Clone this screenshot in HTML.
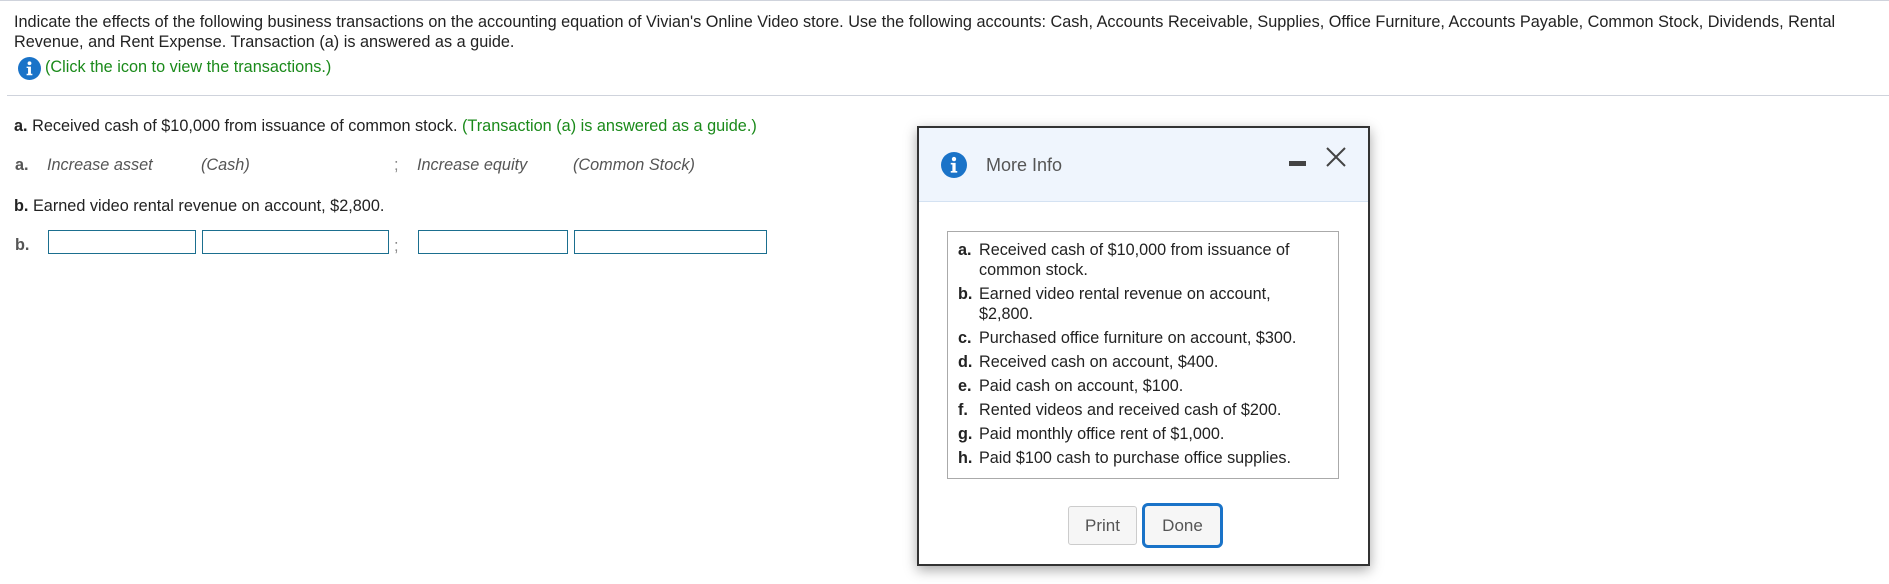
<!DOCTYPE html>
<html><head><style>
body{margin:0;width:1889px;height:584px;overflow:hidden;background:#fff;font-family:"Liberation Sans",Arial,sans-serif;color:#222;position:relative}
.a{position:absolute;white-space:nowrap;font-size:16.25px}
.top{position:absolute;left:0;top:0;width:1889px;height:1px;background:#cfd3dc}
.sep{position:absolute;left:7px;top:95px;width:1882px;height:1px;background:#cfd3dc}
.g{color:#1a8a1a}
.i{font-style:italic;color:#555}
.inp{position:absolute;top:230px;height:22px;border:1px solid #1b6f8f;background:#fff}
.modal{position:absolute;left:917px;top:126px;width:449px;height:436px;border:2px solid #333;background:#fff;box-shadow:0 4px 12px rgba(0,0,0,.35)}
.hdr{position:absolute;left:0;top:0;width:449px;height:73px;background:#eff5fd;border-bottom:1px solid #d4e2f2}
.box{position:absolute;left:28px;top:103px;width:390px;height:246px;border:1px solid #aaa}
.it{position:absolute;left:10px;font-size:16.2px;line-height:20px;color:#222}
.it b{position:absolute;left:0;width:20px}
.it span{display:block;margin-left:21px;width:350px}
.btn{position:absolute;font-size:17px;color:#555;text-align:center;box-sizing:border-box}
</style></head><body>
<div class="top"></div>
<div class="a" style="left:14px;top:13px">Indicate the effects of the following business transactions on the accounting equation of Vivian's Online Video store. Use the following accounts: Cash, Accounts Receivable, Supplies, Office Furniture, Accounts Payable, Common Stock, Dividends, Rental</div>
<div class="a" style="left:14px;top:33px">Revenue, and Rent Expense. Transaction (a) is answered as a guide.</div>
<svg style="position:absolute;left:18px;top:57px" width="23" height="23" viewBox="0 0 24 24"><circle cx="12" cy="12" r="12" fill="#1a73c8"/><circle cx="12" cy="6.5" r="2" fill="#fff"/><path d="M9 10h4.5v7.5H15V19H9v-1.5h1.5v-6H9z" fill="#fff"/></svg>
<div class="a g" style="left:45px;top:58px">(Click the icon to view the transactions.)</div>
<div class="sep"></div>
<div class="a" style="left:14px;top:117px"><b>a.</b> Received cash of $10,000 from issuance of common stock. <span class="g">(Transaction (a) is answered as a guide.)</span></div>
<div class="a" style="left:15px;top:156px;color:#555;font-weight:bold">a.</div>
<div class="a i" style="left:47px;top:156px">Increase asset</div>
<div class="a i" style="left:201px;top:156px">(Cash)</div>
<div class="a" style="left:394px;top:156px;color:#888">;</div>
<div class="a i" style="left:417px;top:156px">Increase equity</div>
<div class="a i" style="left:573px;top:156px">(Common Stock)</div>
<div class="a" style="left:14px;top:197px"><b>b.</b> Earned video rental revenue on account, $2,800.</div>
<div class="a" style="left:15px;top:236px;color:#555;font-weight:bold">b.</div>
<div class="inp" style="left:48px;width:146px"></div>
<div class="inp" style="left:202px;width:185px"></div>
<div class="a" style="left:394px;top:237px;color:#888">;</div>
<div class="inp" style="left:418px;width:148px"></div>
<div class="inp" style="left:574px;width:191px"></div>

<div class="modal">
 <div class="hdr">
  <svg style="position:absolute;left:22px;top:24px" width="26" height="26" viewBox="0 0 24 24"><circle cx="12" cy="12" r="12" fill="#1a73c8"/><circle cx="12" cy="6.5" r="2" fill="#fff"/><path d="M9 10h4.5v7.5H15V19H9v-1.5h1.5v-6H9z" fill="#fff"/></svg>
  <div style="position:absolute;left:67px;top:27px;font-size:18px;color:#555">More Info</div>
  <div style="position:absolute;left:370px;top:33px;width:17px;height:5px;background:#444"></div>
  <svg style="position:absolute;left:407px;top:19px" width="20" height="20" viewBox="0 0 20 20"><path d="M1 1L19 19M19 1L1 19" stroke="#444" stroke-width="2"/></svg>
 </div>
 <div class="box">
  <div class="it" style="top:8px"><b>a.</b><span>Received cash of $10,000 from issuance of common stock.</span></div>
  <div class="it" style="top:52px"><b>b.</b><span>Earned video rental revenue on account, $2,800.</span></div>
  <div class="it" style="top:96px"><b>c.</b><span>Purchased office furniture on account, $300.</span></div>
  <div class="it" style="top:120px"><b>d.</b><span>Received cash on account, $400.</span></div>
  <div class="it" style="top:144px"><b>e.</b><span>Paid cash on account, $100.</span></div>
  <div class="it" style="top:168px"><b>f.</b><span>Rented videos and received cash of $200.</span></div>
  <div class="it" style="top:192px"><b>g.</b><span>Paid monthly office rent of $1,000.</span></div>
  <div class="it" style="top:216px"><b>h.</b><span>Paid $100 cash to purchase office supplies.</span></div>
 </div>
 <div class="btn" style="left:149px;top:378px;width:69px;height:39px;line-height:37px;border:1px solid #ccc;border-radius:3px;background:#f6f6f6">Print</div>
 <div class="btn" style="left:223px;top:375px;width:81px;height:45px;line-height:39px;border:3px solid #1a73c8;border-radius:6px;background:#f6f6f6">Done</div>
</div>
</body></html>
